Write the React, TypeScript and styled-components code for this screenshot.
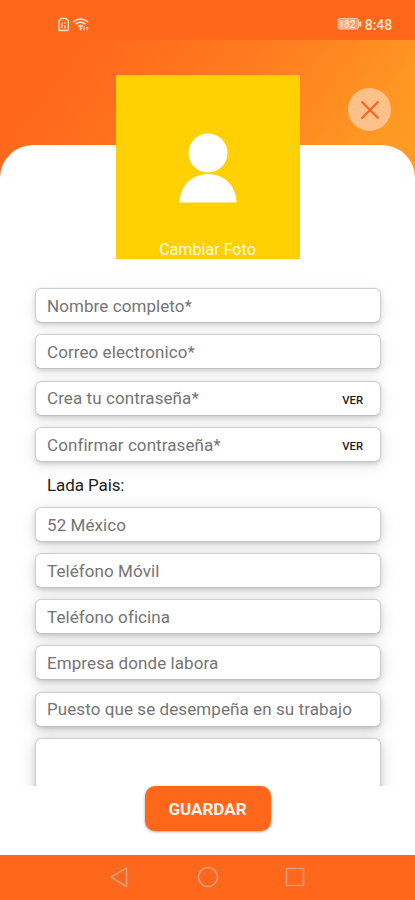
import React from "react";
import styled, { createGlobalStyle } from "styled-components";

const GlobalStyle = createGlobalStyle`
  * { box-sizing: border-box; }
  html, body { margin: 0; padding: 0; }
  body { font-family: Roboto, "Liberation Sans", sans-serif; overflow: hidden; }
`;

const Screen = styled.div`
  width: 415px;
  height: 900px;
  display: flex;
  flex-direction: column;
  overflow: hidden;
  background: #ff6a1c;
`;

const StatusBar = styled.header`
  flex: none;
  height: 40px;
  padding: 8px 23px 0 57px;
  display: flex;
  align-items: center;
  justify-content: space-between;
  background: #ff671b;
  color: #ffe3d0;
`;

const StatusGroup = styled.div<{ $gap: number }>`
  display: flex;
  align-items: center;
  gap: ${(p) => p.$gap}px;
`;

const Clock = styled.span`
  font-size: 14px;
  font-weight: 500;
  letter-spacing: -0.1px;
  line-height: 16px;
  padding-top: 2px;
`;

const Hero = styled.section`
  position: relative;
  flex: none;
  height: 219px;
  padding-top: 35px;
  display: flex;
  justify-content: center;
  background: linear-gradient(127deg, #ff681b 14%, #ff7a1f 45%, #ff9522 74%, #ff9c26 85%);
`;

const Photo = styled.button`
  position: relative;
  z-index: 2;
  width: 184px;
  height: 184px;
  padding: 0;
  border: 0;
  display: flex;
  flex-direction: column;
  align-items: center;
  justify-content: flex-end;
  gap: 37px;
  background: #ffd002;
  color: #fffbe0;
  font: 400 16.1px/18px Roboto, sans-serif;
`;

const CloseButton = styled.button`
  position: absolute;
  top: 48px;
  left: 348px;
  width: 43px;
  height: 43px;
  padding: 0;
  border: 0;
  border-radius: 50%;
  display: grid;
  place-items: center;
  background: #ffc18a;
`;

const Panel = styled.main`
  flex: 1;
  min-height: 0;
  margin-top: -114.5px;
  padding-top: 114.5px;
  z-index: 1;
  display: flex;
  flex-direction: column;
  align-items: center;
  border-radius: 33px 33px 0 0;
  background: #fff;
`;

const Form = styled.form`
  flex: none;
  width: 100%;
  height: 527px;
  padding: 29.3px 34px 0 35px;
  display: flex;
  flex-direction: column;
  gap: 11.2px;
  overflow: hidden;
`;

const Field = styled.div<{ $tall?: boolean; $depth: number }>`
  flex: none;
  height: ${(p) => (p.$tall ? 110 : 35)}px;
  padding: 0 17px 0 12px;
  display: flex;
  align-items: center;
  justify-content: space-between;
  border: 1px solid #cfcfcf;
  border-bottom-color: #c2c2c2;
  border-radius: 6px;
  background: #fff;
  box-shadow: 0 2px 4px rgba(0, 0, 0, 0.14), 0 3px 16px rgba(0, 0, 0, ${(p) => p.$depth});
  color: #747474;
  font-size: 17px;
  line-height: 22px;
  letter-spacing: 0.08px;
  white-space: nowrap;
`;

const FieldText = styled.span`
  margin-left: -1px;
  padding-top: 0.4px;
`;

const Reveal = styled.span`
  margin-top: 5px;
  color: #222;
  font-size: 11.3px;
  font-weight: 500;
  letter-spacing: 0;
`;

const Label = styled.div`
  position: relative;
  flex: none;
  height: 22.6px;
  padding-left: 12px;
  color: #222;
  font-size: 17px;
  line-height: 25px;
  letter-spacing: -0.1px;
`;

const SaveButton = styled.button`
  flex: none;
  width: 126px;
  height: 45px;
  padding: 0;
  border: 0;
  border-radius: 10px;
  background: #ff671b;
  box-shadow: 0 1px 3px rgba(0, 0, 0, 0.35);
  color: #fff3eb;
  font: 700 17px/20px Roboto, sans-serif;
`;

const NavBar = styled.nav`
  flex: none;
  height: 45.5px;
  padding: 1px 109px;
  display: flex;
  align-items: center;
  justify-content: space-between;
  background: #ff671b;
`;

const SimIcon = () => (
  <svg width="13" height="15" viewBox="0 0 13 15" fill="none" stroke="currentColor">
    <path d="M2 3.6 4.2 1.5H9l2.3 2.3v8.7q0 1-1 1H3q-1 0-1-1z" strokeWidth="1.4" />
    <path d="M5 5.500v6M8 5v1.800M8 8v3.500" strokeWidth="1.2" />
  </svg>
);

const WifiIcon = () => (
  <svg width="18" height="15" viewBox="0 0 18 15" fill="none" stroke="currentColor" strokeWidth="1.6">
    <path d="M1 4.8Q8.500-.8 16 4.800M3.500 7.200Q8.500 3.200 13.500 7.200M6 9.500Q8.500 7.500 11 9.500M8.500 9.500v3.800" />
    <path d="M12 9.500v3.500M10.800 11.700l1.200 1.400M15 13.400V10M13.800 11.400 15 10l1.200 1.400" strokeWidth="1" />
  </svg>
);

const BatteryIcon = () => (
  <svg width="25" height="14" viewBox="0 0 25 14">
    <rect x="1" y="1.500" width="20.500" height="10.500" rx="2" fill="#ff9c69" stroke="#ffc9aa" strokeWidth="1" />
    <path d="M23.300 4.500v5" stroke="#ffdcc6" strokeWidth="2" />
    <rect x="2.500" y="3" width="4" height="7.500" fill="#ffc19c" />
    <text x="7" y="10.500" fontFamily="Roboto" fontSize="10" fontWeight="500" fill="#fff0e4">82</text>
  </svg>
);

const PersonIcon = () => (
  <svg width="58" height="71" viewBox="0 0 58 71" fill="#fff">
    <circle cx="29" cy="20" r="19.500" />
    <path d="M.5 69.500C1 52.500 13 41 29 41s28 11.500 28.500 28.500z" />
  </svg>
);

const CloseIcon = () => (
  <svg width="20" height="20" viewBox="0 0 20 20" fill="none" stroke="#f8621f" strokeWidth="2.200">
    <path d="m1.500 1.500 17 17m0-17-17 17" />
  </svg>
);

const NavIcon = ({ d }: { d: string }) => (
  <svg width="22" height="22" viewBox="0 0 22 22" fill="none" stroke="#d99a7c" strokeWidth="1.700" strokeLinejoin="round">
    <path d={d} />
  </svg>
);

const credentials = [
  { text: "Nombre completo*", depth: 0.08 },
  { text: "Correo electronico*", depth: 0.09 },
  { text: "Crea tu contraseña*", depth: 0.1, reveal: true },
  { text: "Confirmar contraseña*", depth: 0.11, reveal: true },
];

const details = [
  { text: "52 México", depth: 0.12 },
  { text: "Teléfono Móvil", depth: 0.13 },
  { text: "Teléfono oficina", depth: 0.14 },
  { text: "Empresa donde labora", depth: 0.15 },
  { text: "Puesto que se desempeña en su trabajo", depth: 0.16 },
];

export default function App() {
  return (
    <Screen>
      <GlobalStyle />
      <StatusBar>
        <StatusGroup $gap={2}>
          <SimIcon />
          <WifiIcon />
        </StatusGroup>
        <StatusGroup $gap={3}>
          <BatteryIcon />
          <Clock>8:48</Clock>
        </StatusGroup>
      </StatusBar>
      <Hero>
        <Photo type="button">
          <PersonIcon />
          Cambiar Foto
        </Photo>
        <CloseButton type="button" aria-label="Cerrar">
          <CloseIcon />
        </CloseButton>
      </Hero>
      <Panel>
        <Form>
          {credentials.map((f) => (
            <Field key={f.text} $depth={f.depth}>
              <FieldText>{f.text}</FieldText>
              {f.reveal && <Reveal>VER</Reveal>}
            </Field>
          ))}
          <Label>Lada Pais:</Label>
          {details.map((f) => (
            <Field key={f.text} $depth={f.depth}>
              <FieldText>{f.text}</FieldText>
            </Field>
          ))}
          <Field $tall $depth={0.17} />
        </Form>
        <SaveButton type="button">GUARDAR</SaveButton>
      </Panel>
      <NavBar>
        <NavIcon d="M2 11 17.500 2v18.500z" />
        <NavIcon d="M11 1.500a9.500 9.500 0 1 1 0 19 9.500 9.500 0 1 1 0-19z" />
        <NavIcon d="M2.500 2.500h17v17h-17z" />
      </NavBar>
    </Screen>
  );
}
